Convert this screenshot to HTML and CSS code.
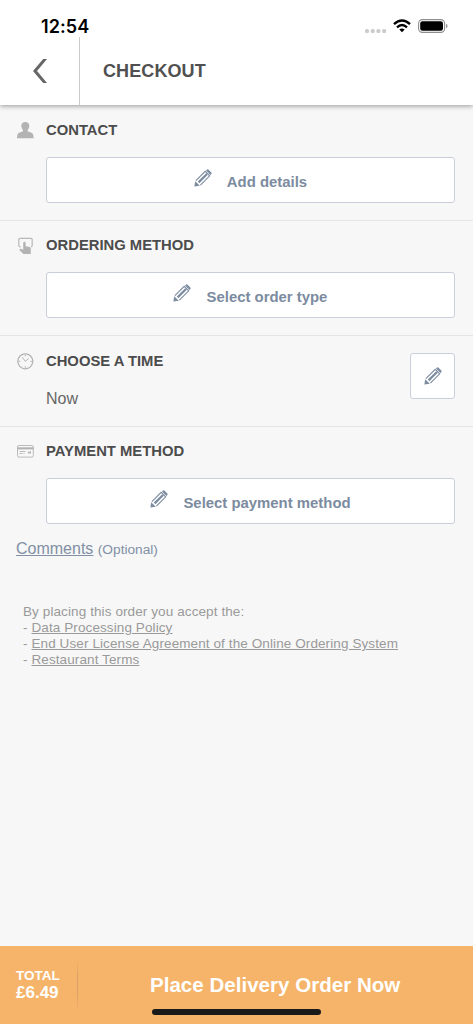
FILE: index.html
```html
<!DOCTYPE html>
<html lang="en">
<head>
<meta charset="utf-8">
<meta name="viewport" content="width=device-width, initial-scale=1">
<title>Checkout</title>
<link rel="stylesheet" href="styles.css">
</head>
<body>
<svg class="defs" aria-hidden="true">
  <symbol id="pencil" viewBox="0 0 18 18">
    <path fill="currentColor" d="M.4 17.6 1.2 12.2 5.8 16.8Z"/>
    <path fill="none" stroke="currentColor" stroke-width="1.1" d="M1.9 11.6 11.2 2.3 15.7 6.8 6.4 16.1"/>
    <path stroke="currentColor" stroke-width="2.2" d="M4.6 13.4 13 5"/>
    <path fill="currentColor" d="M12 1.5 13 .6Q13.8 0 14.6.7L17.3 3.4Q18 4.2 17.4 5L16.5 6Z"/>
  </symbol>
</svg>
<div class="screen">
  <header class="top">
    <div class="status">
      <time class="clock">12:54</time>
      <div class="indicators">
        <svg class="dots" viewBox="0 0 22 4"><g fill="#ccc"><rect width="4" height="4" rx="1.5"/><rect x="5.7" width="4" height="4" rx="1.5"/><rect x="11.4" width="4" height="4" rx="1.5"/><rect x="17.1" width="4" height="4" rx="1.5"/></g></svg>
        <svg class="wifi" viewBox="0 0 18 14"><g fill="none" stroke="#000" stroke-width="2.4"><path d="M1 5.2Q9-2.2 17 5.2"/><path d="M4 8.3Q9 3.8 14 8.3"/></g><path d="M6.3 10.5Q9 8.3 11.7 10.5L9 13.3Z"/></svg>
        <svg class="battery" viewBox="0 0 30 14"><rect x=".6" y=".6" width="26" height="12.8" rx="3.8" fill="none" stroke="#8e8e8e" stroke-width="1.1"/><rect x="2.2" y="2.2" width="22.8" height="9.6" rx="2.3"/><path fill="#999" d="M28 4.8Q29.6 5.3 29.6 7T28 9.2Z"/></svg>
      </div>
    </div>
    <div class="nav">
      <div class="back"><svg viewBox="0 0 14 24"><path fill="#666" d="M10.2 0H14L4 12 14 24H10.2L0 12Z"/></svg></div>
      <h1 class="title">CHECKOUT</h1>
    </div>
  </header>
  <main class="content">
    <section class="section">
      <svg class="icon" viewBox="0 0 18 18"><path fill="#b3b3b3" d="M9.3 1C7 1 5.3 2.3 5.3 4.8 5.3 7 6.3 8.2 7 8.9V10.3L2.6 11.9Q1 12.7 1 17.2H17.6Q17.6 12.7 16 11.9L11.6 10.3V8.9C12.3 8.2 13.3 7 13.3 4.8 13.3 2.3 11.6 1 9.3 1Z"/></svg>
      <div class="body">
        <h2>CONTACT</h2>
        <div class="button"><svg class="pencil"><use href="#pencil"/></svg><span>Add details</span></div>
      </div>
    </section>
    <section class="section ordering">
      <svg class="icon" viewBox="0 0 18 18"><path fill="none" stroke="#b8b8b8" stroke-width="1.2" d="M4.7 9.8H4Q2.8 9.8 2.8 8.6V2.6Q2.8 1.4 4 1.4H15Q16.2 1.4 16.2 2.6V8.6Q16.2 9.8 15 9.8"/><path fill="#b3b3b3" d="M7.2 6Q7.2 4.7 8.4 4.7T9.6 6V9.3L13.6 10Q14.8 10.3 14.8 11.5V16.9H7.4L3.6 13.2Q3.2 12.4 4 11.9 4.8 11.5 5.6 12L7.2 13Z"/></svg>
      <div class="body">
        <h2>ORDERING METHOD</h2>
        <div class="button"><svg class="pencil"><use href="#pencil"/></svg><span>Select order type</span></div>
      </div>
    </section>
    <section class="section time-section">
      <svg class="icon" viewBox="0 0 18 18"><g fill="none" stroke="#b3b3b3"><circle cx="9.3" cy="9.3" r="7.5" stroke-width="1.3"/><path d="M6.3 5.3 9.3 9.3 12.6 6.6M9.3 2.8V4.3M9.3 14.3V15.8M2.8 9.3H4.3M14.3 9.3H15.8"/></g></svg>
      <div class="body">
        <h2>CHOOSE A TIME</h2>
        <p class="time">Now</p>
      </div>
      <div class="button edit"><svg class="pencil"><use href="#pencil"/></svg></div>
    </section>
    <section class="section payment">
      <svg class="icon" viewBox="0 0 18 18"><rect x="1.5" y="3.5" width="15.8" height="11.6" rx="1.5" fill="none" stroke="#bbb"/><path fill="#b3b3b3" d="M1.4 5.3H17.4V7.4H1.4Z"/><path stroke="#bbb" d="M3.5 9.5H9.5M3.5 11.5H6.5M7.5 11.5H8.5"/><path fill="#b3b3b3" d="M11.5 10 15 9.2V11.5H12.2Z"/></svg>
      <div class="body">
        <h2>PAYMENT METHOD</h2>
        <div class="button"><svg class="pencil"><use href="#pencil"/></svg><span>Select payment method</span></div>
      </div>
    </section>
    <p class="comments"><a>Comments</a> <small>(Optional)</small></p>
    <div class="legal">
      <p>By placing this order you accept the:</p>
      <p>- <a>Data Processing Policy</a></p>
      <p>- <a>End User License Agreement of the Online Ordering System</a></p>
      <p>- <a>Restaurant Terms</a></p>
    </div>
  </main>
  <footer class="footer">
    <div class="total"><span>TOTAL</span><strong>£6.49</strong></div>
    <div class="divider"></div>
    <div class="order"><span>Place Delivery Order Now</span></div>
    <div class="home-bar"></div>
  </footer>
</div>
</body>
</html>
```

FILE: styles.css
```css
* { box-sizing: border-box; }
body { margin: 0; font-family: "Liberation Sans", Arial, sans-serif; }
h1, h2, p { margin: 0; }
.defs { position: absolute; width: 0; height: 0; }
.screen { display: flex; flex-direction: column; height: 1024px; background: #f7f7f7; overflow: hidden; }
.top { height: 105px; flex: none; background: #fff; box-shadow: 0 1px 5px rgba(0,0,0,.4); }
.status { height: 37px; display: flex; justify-content: space-between; padding: 17px 25px 0 41px; }
.clock { font: 600 18px/20px Inter, sans-serif; letter-spacing: .1px; }
.indicators { display: flex; align-items: flex-start; padding-top: 2px; }
.dots { width: 22px; height: 4px; margin: 10px 6px 0 0; }
.wifi { width: 18px; height: 14px; margin-right: 7px; }
.battery { width: 30px; height: 14px; }
.nav { height: 68px; display: flex; }
.back { width: 80px; border-right: 1px solid #ccc; padding: 22px 0 0 33px; }
.back svg { display: block; width: 14px; height: 24px; }
.title { padding: 23px 0 0 23px; font-size: 18px; line-height: 22px; letter-spacing: .1px; color: #505050; }
.content { flex: 1; }
.section { display: flex; height: 115px; padding: 15px 18px 0 16px; border-bottom: 1px solid #e4e4e4; }
.section:first-child { height: 116px; padding-top: 16px; }
.icon { width: 18px; height: 18px; margin-right: 12px; flex: none; }
.body { flex: 1; }
h2 { font-size: 14.8px; line-height: 18px; color: #4c4c4c; }
.button { height: 46px; margin-top: 18px; display: flex; align-items: center; justify-content: center; border: 1px solid #c9ceda; border-radius: 3px; background: #fff; color: #7c8ba0; font-size: 14.9px; font-weight: bold; line-height: 18px; }
.pencil { width: 18px; height: 18px; margin: 0 15px 4px 0; }
.button span { padding-top: 4px; }
.ordering .pencil { margin-left: -1px; margin-right: 16px; }
.ordering .icon { margin-top: 1px; }
.time-section { height: 91px; padding-top: 16px; }
.time { margin-top: 19px; font-size: 16px; line-height: 20px; color: #666; }
.edit { width: 45px; margin-top: 1px; }
.edit .pencil { margin: 0; }
.payment { height: 104px; border: 0; }
.comments { padding-left: 16px; margin-top: 8px; font-size: 16px; line-height: 20px; color: #8190a5; }
.comments a, .legal a { text-decoration: underline; }
.comments small { font-size: 13.7px; }
.legal { margin: 44px 0 0 23px; color: #9a9a9a; font-size: 13.5px; letter-spacing: .1px; line-height: 16px; }
.footer { position: relative; display: flex; flex: none; height: 78px; background: #f5b46a; color: #fff; }
.total { width: 77px; padding: 21px 0 0 16px; display: flex; flex-direction: column; font-weight: bold; }
.total span { font-size: 13.5px; line-height: 17px; }
.total strong { font-size: 17px; line-height: 18px; }
.divider { width: 1px; height: 54px; margin-top: 12px; background: linear-gradient(transparent, #d9a067 35%, #d9a067 65%, transparent); }
.order { flex: 1; padding: 27px 0 0 72px; font-size: 20.5px; letter-spacing: .03px; line-height: 24px; font-weight: bold; white-space: nowrap; }
.home-bar { position: absolute; left: 152px; bottom: 9px; width: 169px; height: 6px; border-radius: 3px; background: #1a1a1a; }
```
